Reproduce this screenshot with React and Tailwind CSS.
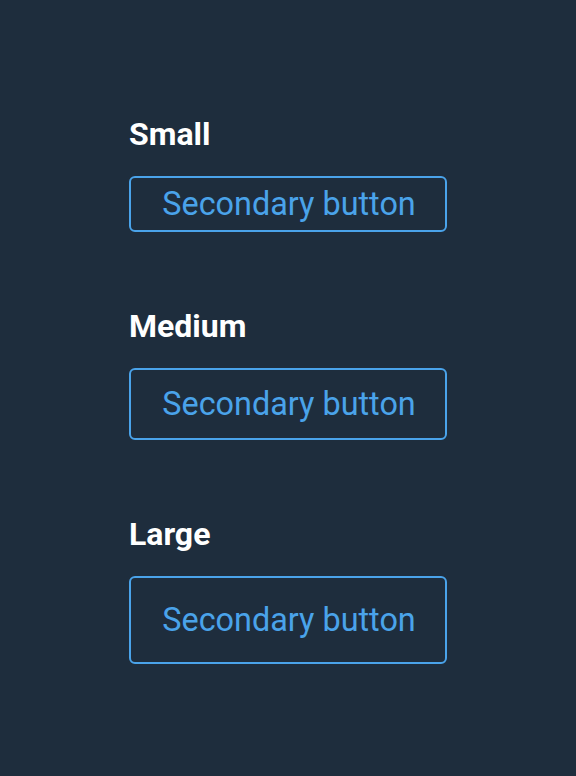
export default function App() {
  const sizes = [
    { label: "Small", pad: "py-[7px]" },
    { label: "Medium", pad: "py-[15px]" },
    { label: "Large", pad: "py-[23px]" },
  ];
  return (
    <div className="w-[576px] h-[776px] bg-[#1e2d3d] pl-[129px] pt-[115px] flex flex-col gap-[75px]" style={{ fontFamily: "Roboto, sans-serif" }}>
      {sizes.map((s) => (
        <div key={s.label} className="flex flex-col items-start gap-[23px]">
          <h2 className="text-[32px] leading-[38px] font-bold text-white">{s.label}</h2>
          <button className={`w-[318px] border-2 border-[#4aa3ea] rounded-[6px] text-center pl-[2px] ${s.pad} text-[32.4px] leading-[38px] whitespace-nowrap text-[#4aa3ea] bg-transparent`}>
            Secondary button
          </button>
        </div>
      ))}
    </div>
  );
}
